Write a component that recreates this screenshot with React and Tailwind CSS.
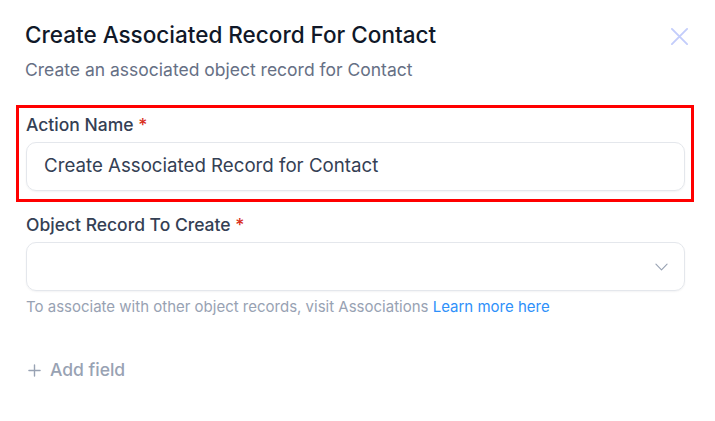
import React from "react";

export default function App() {
  return (
    <div className="w-[715px] h-[421px] bg-white overflow-hidden" style={{ fontFamily: "Inter, 'Noto Sans', sans-serif" }}>
      <div className="flex items-start justify-between pl-[25px] pr-[26px] pt-[21px]">
        <div className="flex flex-col">
          <h1 className="text-[22.5px] leading-[28px] font-medium text-[#101828]">Create Associated Record For Contact</h1>
          <p className="mt-[9px] text-[17.5px] leading-[24px] text-[#667085]">Create an associated object record for Contact</p>
        </div>
        <button className="mt-[6px] text-[#c3cdfb]">
          <svg width="19" height="19" viewBox="0 0 20 20" fill="none" stroke="currentColor" strokeWidth="2" strokeLinecap="round">
            <path d="M2 2L18 18M18 2L2 18" />
          </svg>
        </button>
      </div>

      <div className="ml-[16px] mr-[21px] mt-[23px] border-[3px] border-[#ff0000] pl-[7px] pr-[6px] pt-[5px] pb-[8px]">
        <label className="block text-[17.5px] leading-[24px] font-medium text-[#344054]">
          Action Name <span className="text-[#d92d20]">*</span>
        </label>
        <div className="mt-[5px] h-[49px] rounded-[10px] border border-[#e4e7ec] flex items-center px-[17px] shadow-[0_1px_2px_rgba(16,24,40,0.05)]">
          <span className="text-[18.7px] text-[#344054]">Create Associated Record for Contact</span>
        </div>
      </div>

      <div className="pl-[26px] pr-[30px] mt-[11px]">
        <label className="block text-[17.5px] leading-[24px] font-medium text-[#344054]">
          Object Record To Create <span className="text-[#d92d20]">*</span>
        </label>
        <div className="mt-[5px] h-[49px] rounded-[10px] border border-[#e4e7ec] flex items-center justify-end pr-[16px] shadow-[0_1px_2px_rgba(16,24,40,0.05)]">
          <svg width="13" height="8" viewBox="0 0 14 8" fill="none" stroke="#98a2b3" strokeWidth="1.2" strokeLinecap="round" strokeLinejoin="round">
            <path d="M1 1L7 7L13 1" />
          </svg>
        </div>
        <p className="mt-[6px] text-[15px] leading-[20px] text-[#98a2b3]">
          To associate with other object records, visit Associations <span className="text-[#2e90fa]">Learn more here</span>
        </p>

        <div className="mt-[41px] pl-[2px] flex items-center gap-[9px] text-[#98a2b3]">
          <svg width="13" height="13" viewBox="0 0 14 14" fill="none" stroke="currentColor" strokeWidth="1.5" strokeLinecap="round">
            <path d="M7 1V13M1 7H13" />
          </svg>
          <span className="text-[17.5px] leading-[24px] font-medium">Add field</span>
        </div>
      </div>
    </div>
  );
}
